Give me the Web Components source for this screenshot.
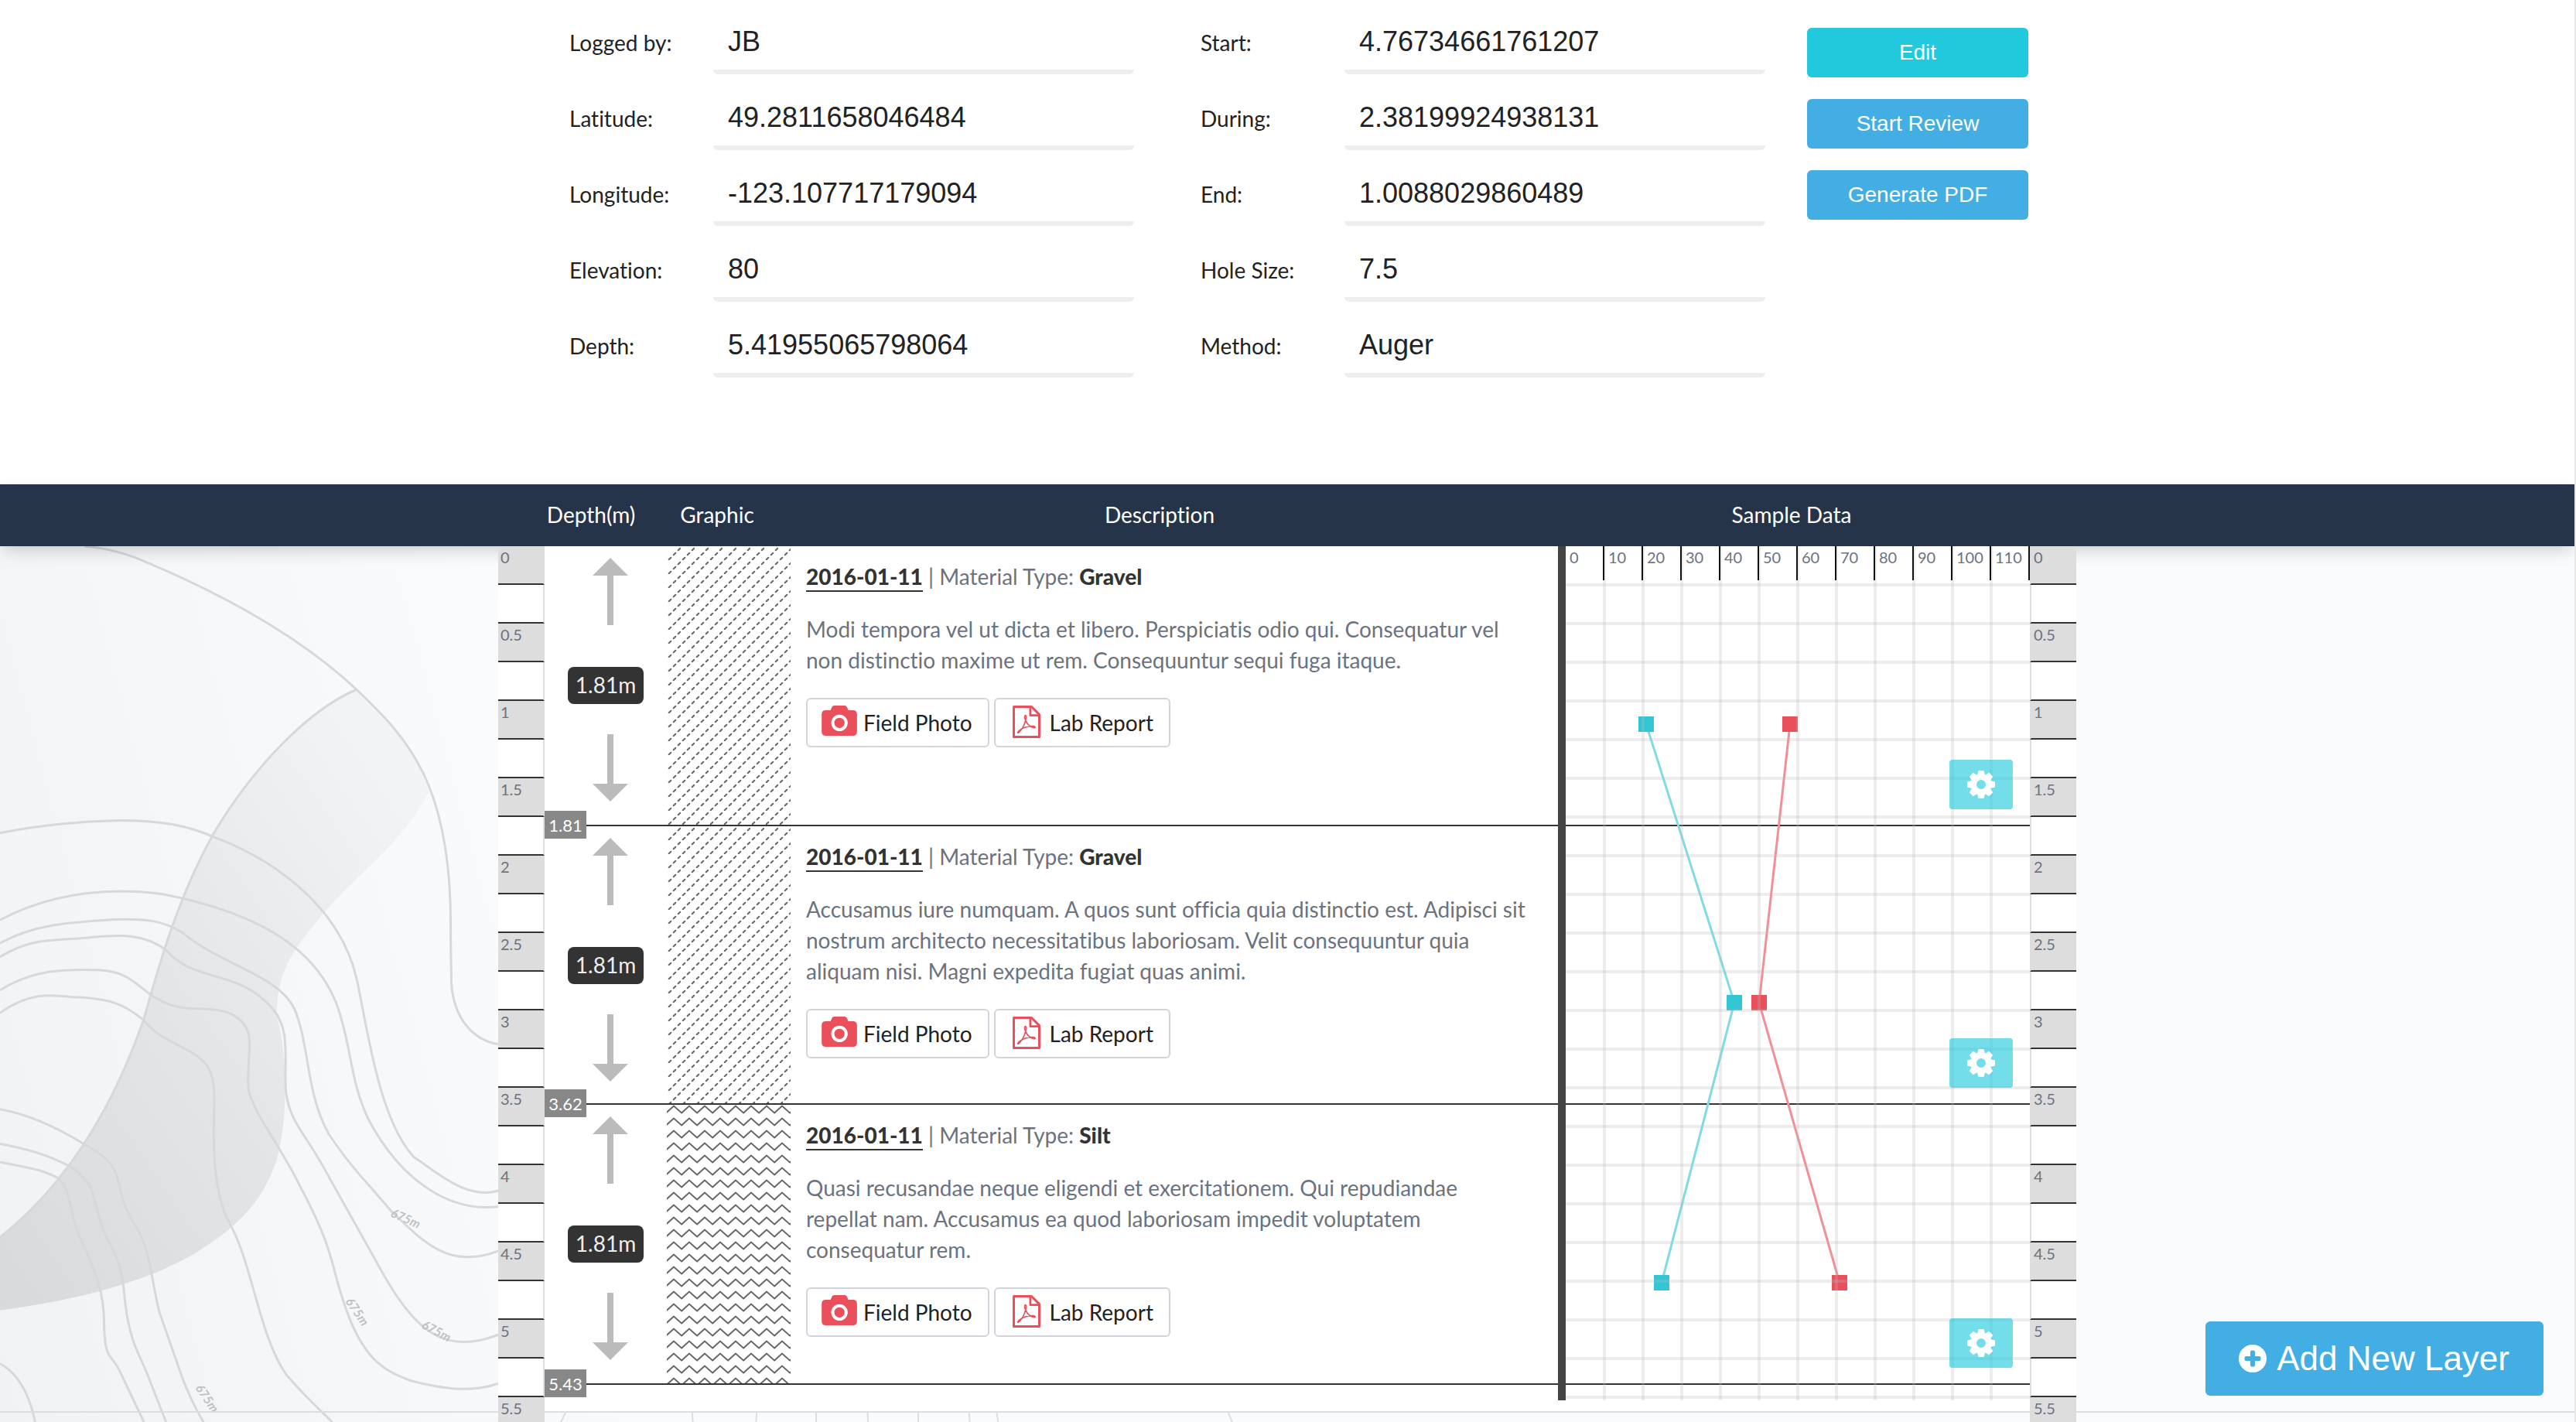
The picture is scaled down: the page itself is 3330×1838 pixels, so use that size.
<!DOCTYPE html>
<html lang="en">
<head>
<meta charset="utf-8">
<title>Borehole Log</title>
<style>
  html, body { margin: 0; height: 100%; }
  body { font: 28px/40px Lato, "Liberation Sans", sans-serif; font-variant-ligatures: none; color: #6b7280; background: #fff; }
</style>
</head>
<body>
<log-app></log-app>

<script>
const define = (name, render) => customElements.define(name, class extends HTMLElement {
  connectedCallback() {
    if (this.shadowRoot) return;
    this.attachShadow({ mode: 'open' }).innerHTML =
      '<style>*{box-sizing:border-box}</style>' + render(this);
  }
});

/* Labelled text box */
define('log-field', el => `
  <style>
    :host { display: flex; align-items: baseline; height: 80px; color: #222; }
    label { width: 186px; flex: none; }
    input { flex: 1; min-width: 0; height: 80px; padding: 2px 19px 0; border: 0; border-bottom: 6px solid #eee;
      border-radius: 6px; background: #fff; color: #222; font: 36px "Liberation Sans", Arial, sans-serif; outline: 0; }
  </style>
  <label for="f">${el.getAttribute('label')}</label>
  <input id="f" type="text" value="${el.getAttribute('value')}">`);

/* Filled action button */
define('log-button', el => `
  <style>
    :host { display: block; }
    button { width: 100%; height: 64px; border: 0; border-radius: 6px; background: var(--fill, #43aee3);
      color: #fff; font: 28px/64px "Liberation Sans", Arial, sans-serif; padding: 0; cursor: pointer; }
  </style>
  <button type="button"><slot></slot></button>`);

define('log-form', () => `
  <style>
    :host { display: block; background: #fff; }
    form { max-width: 2040px; margin: 0 auto; padding: 16px 62px 138px 92px; display: flex; }
    .col { flex: 1; display: flex; flex-direction: column; gap: 18px; }
    .col + .col { margin-left: 86px; }
    .actions { width: 286px; margin-left: 54px; padding-top: 20px; display: flex; flex-direction: column; gap: 28px; }
  </style>
  <form>
    <div class="col">
      <log-field label="Logged by:" value="JB"></log-field>
      <log-field label="Latitude:" value="49.2811658046484"></log-field>
      <log-field label="Longitude:" value="-123.107717179094"></log-field>
      <log-field label="Elevation:" value="80"></log-field>
      <log-field label="Depth:" value="5.41955065798064"></log-field>
    </div>
    <div class="col">
      <log-field label="Start:" value="4.76734661761207"></log-field>
      <log-field label="During:" value="2.38199924938131"></log-field>
      <log-field label="End:" value="1.0088029860489"></log-field>
      <log-field label="Hole Size:" value="7.5"></log-field>
      <log-field label="Method:" value="Auger"></log-field>
    </div>
    <div class="actions">
      <log-button style="--fill:#22c9dd">Edit</log-button>
      <log-button>Start Review</log-button>
      <log-button>Generate PDF</log-button>
    </div>
  </form>`);

define('log-header', () => `
  <style>
    :host { display: block; background: #26344a; color: #fff; box-shadow: 0 8px 22px -4px rgba(0,0,0,.2); }
    div { max-width: 2040px; height: 80px; margin: 0 auto; padding: 0 20px 0 60px; display: grid;
      grid-template-columns: 120px 206px 1fr 696px; text-align: center; line-height: 78px; }
  </style>
  <div><span>Depth(m)</span><span>Graphic</span><span>Description</span><span>Sample Data</span></div>`);

/* Depth scale: one cell each quarter metre, labelled each half metre */
define('log-ruler', el => {
  const right = el.hasAttribute('right');
  let cells = '';
  for (let i = 0; i < 23; i++) cells += `<div class="${i % 2 ? '' : 'on'}">${i % 2 ? '' : i / 4}</div>`;
  return `
  <style>
    :host { display: block; width: 60px; flex: none; background: #fff; margin-bottom: -32px; position: relative; }
    div { height: 50px; padding-left: 3px; font-size: 20px; line-height: 28px;
      border-bottom: 2px solid #333; border-${right ? 'left' : 'right'}: 2px solid #ddd; }
    .on { background: #ddd; }
  </style>${cells}`;
});

const PATTERNS = {
  gravel: `<pattern id="p" width="18" height="18" patternUnits="userSpaceOnUse">
      <path d="M2.7 17.3L5.3 14.7M8.7 11.3L11.3 8.7M14.7 5.3L17.3 2.7" stroke="#666" stroke-width="2" stroke-linecap="round"/></pattern>`,
  silt: `<pattern id="p" width="20" height="16" patternUnits="userSpaceOnUse">
      <path d="M-11 1.5L-1 10.5L9 1.5L19 10.5L29 1.5" fill="none" stroke="#666" stroke-width="2"/></pattern>`
};

/* One soil layer: thickness, graphic, description */
define('log-layer', el => `
  <style>
    :host { display: grid; grid-template-columns: 158px 160px 1fr; position: relative; background: #fff;
      height: var(--h, 362px); border-bottom: 2px solid #333; box-sizing: border-box; }
    .depth { display: flex; flex-direction: column; align-items: center; padding-top: 15px; }
    .arrow { display: block; width: 58px; height: 87px; }
    .size { width: 98px; height: 48px; margin: 54px 0 39px; border-radius: 8px; background: #333; color: #eee;
      text-align: center; line-height: 46px; }
    .end { position: absolute; left: 0; bottom: -18px; width: 54px; height: 36px; background: #888; color: #fff;
      font-size: 22px; line-height: 38px; text-align: center; z-index: 1; }
    .graphic { display: block; width: 160px; height: 100%; }
    .text { padding: 19px 40px 0 20px; }
    h2 { margin: 0; font: inherit; }
    h2 a { color: #333; font-weight: 900; text-decoration: none; border-bottom: 2px solid #333; padding-bottom: 1px; }
    strong { color: #333; font-weight: 900; }
    p { margin: 28px 0 29px; }
    .files { display: flex; gap: 6px; }
    .files button { display: flex; align-items: center; gap: 8px; height: 64px; padding: 0 20px 0 18px; cursor: pointer;
      background: #fff; border: 2px solid #d1d5db; border-radius: 6px; color: #222; font: inherit; }
    .camera { width: 46px; height: 39px; margin-bottom: 5px; }
    .pdf { width: 44px; height: 42px; margin-bottom: 2px; }
  </style>
  <div class="depth">
    <svg class="arrow" viewBox="0 0 58 87"><path d="M35 0L58 23H39V87H31V23H12Z" fill="#bbb"/></svg>
    <div class="size">${el.getAttribute('size')}</div>
    <svg class="arrow" viewBox="0 0 58 87"><path d="M35 87L58 64H39V0H31V64H12Z" fill="#bbb"/></svg>
  </div>
  <svg class="graphic"><defs>${PATTERNS[el.getAttribute('pattern')]}</defs><rect width="100%" height="100%" fill="url(#p)"/></svg>
  <div class="text">
    <h2><a href="#">2016-01-11</a> | Material Type: <strong>${el.getAttribute('material')}</strong></h2>
    <p><slot></slot></p>
    <div class="files">
      <button type="button">
        <svg class="camera" viewBox="96 66 137 117">
          <path fill="#e9505c" d="M112 84H131C134 74 137 66 146 66H184C193 66 196 74 199 84H217Q233 84 233 100V167Q233 183 217 183H112Q96 183 96 167V100Q96 84 112 84Z"/>
          <circle cx="165" cy="133" r="26" fill="none" stroke="#fff" stroke-width="12"/>
        </svg>Field Photo</button>
      <button type="button">
        <svg class="pdf" viewBox="831 66 109 126" fill="none" stroke="#e9505c" stroke-linejoin="round" stroke-linecap="round">
          <path stroke-width="9" d="M836 70.500H905L935 101V187.500H836Z"/>
          <path stroke-width="8" d="M900 71V104H934"/>
          <path stroke-width="5" d="M882 104C877 103 877 114 882 124C889 139 901 150 916 152C922 152 919 146 910 146C890 146 869 153 857 163C848 171 851 174 857 169C869 157 879 137 883 118C885 110 885 105 882 104Z"/>
        </svg>Lab Report</button>
    </div>
  </div>
  <div class="end">${el.getAttribute('end')}</div>`);

/* Sample chart: value across, depth down */
define('log-chart', () => {
  let grid = '', ticks = '';
  for (let x = 50; x < 600; x += 50) grid += `<path d="M${x} 0V1104"/>`;
  for (let y = 50; y <= 1100; y += 50) grid += `<path d="M0 ${y}H600"/>`;
  for (let v = 0; v <= 110; v += 10) ticks += `<span>${v}</span>`;
  const series = (pts, c, l) => `<polyline points="${pts.join(' ')}" fill="none" stroke="${l}" stroke-width="3"/>` +
    pts.map(([x, y]) => `<rect x="${x - 10}" y="${y - 10}" width="20" height="20" fill="${c}"/>`).join('');
  const teeth = [0, 45, 90, 135, 180, 225, 270, 315].map(a =>
    `<path d="M-5 -12L-3.500 -18H3.500L5 -12Z" transform="rotate(${a})"/>`).join('');
  const gear = `<button type="button" aria-label="Layer settings"><svg viewBox="-18 -18 36 36" fill="#fff">
    <circle r="9.700" fill="none" stroke="#fff" stroke-width="7.400"/>${teeth}</svg></button>`;
  return `
  <style>
    :host { display: block; position: relative; width: 600px; height: 1104px; flex: none; background: #fff; }
    .plot { display: block; position: absolute; inset: 0; width: 600px; height: 1104px; }
    .ticks { position: relative; display: flex; }
    .ticks span { width: 50px; height: 44px; padding-left: 5px; border-right: 2px solid #111; font-size: 20px; line-height: 28px; }
    button { position: absolute; right: 22px; width: 82px; height: 64px; border: 0; border-radius: 4px; padding: 0;
      background: rgba(34,201,221,.63); display: flex; align-items: center; justify-content: center; cursor: pointer; }
    button svg { width: 36px; height: 36px; }
    button:nth-of-type(1) { top: 276px; }
    button:nth-of-type(2) { top: 636px; }
    button:nth-of-type(3) { top: 998px; }
  </style>
  <svg class="plot" viewBox="0 0 600 1104">
    <path d="M0 361H600M0 721H600M0 1083H600" stroke="#333" stroke-width="2"/>
    ${series([[104, 230], [218, 590], [124, 952]], '#33c5d3', '#7fdce5')}
    ${series([[290, 230], [250, 590], [354, 952]], '#e9505c', '#f28e96')}
    <g stroke="#bbb" stroke-opacity=".26" stroke-width="4">${grid}</g>
  </svg>
  <div class="ticks">${ticks}</div>
  ${gear}${gear}${gear}`;
});

/* Topographic backdrop */
define('log-contours', () => `
  <style>
    :host { display: block; position: absolute; inset: 0; overflow: hidden;
      background: linear-gradient(75deg, #f1f2f4 0, #f6f7f9 14%, #fafbfd 26%, #fafbfd 100%); }
    svg { position: absolute; left: 0; top: 0; }
    text { font: italic bold 16px Lato, sans-serif; fill: #bfc1c4; }
  </style>
  <svg width="660" height="1132" viewBox="0 22 1568 1546" preserveAspectRatio="none">
    <defs><linearGradient id="g" x1="0" y1="1" x2="1" y2="0">
      <stop offset="0" stop-color="#d8d9db"/><stop offset=".45" stop-color="#e4e5e7"/><stop offset=".85" stop-color="#f1f2f4"/><stop offset="1" stop-color="#f4f5f7"/>
    </linearGradient></defs>
    <path fill="url(#g)" d="M0 1242C180 1160 330 1040 440 860C490 760 540 650 655 530C780 410 950 310 1095 275C1200 325 1270 380 1318 455C1220 560 1090 600 980 680C890 740 850 780 850 850C890 940 878 1050 850 1105C800 1190 710 1230 600 1270C420 1330 200 1355 0 1371Z"/>
    <g fill="none" stroke="#d6d8da" stroke-width="3">
      <path vector-effect="non-scaling-stroke" d="M0 1242C180 1160 330 1040 440 860C490 760 540 650 655 530C780 410 950 310 1095 275"/>
      <path vector-effect="non-scaling-stroke" d="M260 22Q340 26 415 42C640 95 900 170 1095 275C1250 360 1385 440 1384 690C1384 740 1386 770 1386 790C1392 860 1460 895 1530 901"/>
      <path vector-effect="non-scaling-stroke" d="M0 528Q180 508 365 506C500 506 580 516 655 535C820 570 1040 650 1095 785C1125 860 1160 1030 1270 1100C1350 1130 1430 1175 1530 1160"/>
      <path vector-effect="non-scaling-stroke" d="M0 682Q160 632 370 631C470 631 520 638 565 644C750 670 990 720 1050 860C1080 920 1080 970 1130 1032C1200 1110 1340 1200 1530 1188"/>
      <path vector-effect="non-scaling-stroke" d="M0 723C100 690 210 686 350 681C440 679 500 682 560 704C680 762 860 780 905 840C950 900 940 990 1010 1060C1080 1120 1120 1140 1200 1195C1300 1250 1380 1300 1530 1266"/>
      <path vector-effect="non-scaling-stroke" d="M0 747C90 715 150 718 250 714C340 710 430 700 510 735C590 790 720 770 820 828C900 870 870 920 878 985C890 1040 940 1060 1000 1125L1180 1310C1280 1410 1370 1450 1530 1414"/>
      <path vector-effect="non-scaling-stroke" d="M0 806C110 765 220 770 300 770C400 772 420 800 480 820C570 850 620 830 700 845C800 870 755 910 763 980C775 1020 860 1080 920 1150C1040 1280 1010 1290 1070 1380C1130 1470 1200 1480 1260 1495C1350 1508 1440 1518 1530 1500"/>
      <path vector-effect="non-scaling-stroke" d="M0 846C90 808 160 814 220 818C340 820 380 830 440 858C490 890 510 890 570 910C640 930 660 950 658 1000C655 1080 655 1120 675 1170C690 1210 710 1215 735 1255C780 1320 810 1430 880 1485C940 1525 980 1545 1020 1568"/>
      <path vector-effect="non-scaling-stroke" d="M0 1016C90 1025 180 1050 260 1078C400 1120 340 1150 405 1210C470 1270 460 1310 490 1375L560 1490Q590 1535 625 1568"/>
      <path vector-effect="non-scaling-stroke" d="M0 1077C80 1085 160 1100 215 1117C310 1150 280 1190 330 1245C380 1300 375 1310 385 1360C400 1430 430 1450 450 1480L510 1568"/>
      <path vector-effect="non-scaling-stroke" d="M0 1109C90 1120 120 1120 180 1138C220 1160 210 1190 240 1235C290 1300 320 1330 320 1400C322 1460 345 1450 365 1475L442 1568"/>
      <path vector-effect="non-scaling-stroke" d="M0 1465Q80 1490 108 1568"/>
    </g>
  </svg>
  <svg width="1700" height="1150" viewBox="0 0 1700 1150">
    <text transform="translate(504 866) rotate(24)">675m</text>
    <text transform="translate(446 976) rotate(56)">675m</text>
    <text transform="translate(544 1010) rotate(28)">675m</text>
    <text transform="translate(252 1088) rotate(56)">675m</text>
    <path fill="none" stroke="#dcdee1" stroke-width="2" d="M736 1110L716 1150M894 1110L897 1150M979 1110L976 1150M1055 1110V1150M1121 1110L1123 1150M1187 1110V1150M1252 1110L1255 1150M1287 1110L1293 1150M1584 1110L1600 1150"/>
  </svg>`);

define('log-add', () => `
  <style>
    :host { position: fixed; right: 42px; bottom: 34px; z-index: 5; }
    button { display: flex; align-items: center; gap: 13px; height: 96px; padding: 0 44px 0 43px; border: 0; border-radius: 6px;
      background: #43aee3; color: #fff; font: 44px/48px "Liberation Sans", Arial, sans-serif; cursor: pointer; }
    svg { width: 36px; height: 36px; }
  </style>
  <button type="button">
    <svg viewBox="0 0 36 36"><circle cx="18" cy="18" r="18" fill="#fff"/>
      <rect x="7.500" y="15" width="21" height="6" rx="2" fill="#43aee3"/><rect x="15" y="7.500" width="6" height="21" rx="2" fill="#43aee3"/></svg>
    <slot></slot>
  </button>`);

define('log-app', () => `
  <style>
    :host { display: flex; flex-direction: column; height: 100vh; overflow: hidden; border-right: 2px solid #e8e8e8; box-sizing: border-box; }
    log-form, log-header { flex: none; }
    log-header { position: relative; }
    main { position: relative; flex: 1; min-height: 0; }
    log-contours { z-index: -1; }
    .log { border-bottom: 2px solid #ddd; }
    .sheet { max-width: 2040px; margin: 0 auto; display: flex; align-items: flex-start; position: relative; }
    .panel { flex: 1; display: flex; align-items: flex-start; background: #fff; padding-bottom: 14px; }
    .layers { flex: 1; }
    .rule { width: 10px; height: 1104px; background: #444; position: relative; }
  </style>
  <log-form></log-form>
  <log-header></log-header>
  <main>
    <log-contours></log-contours>
    <div class="log"><div class="sheet">
      <log-ruler></log-ruler>
      <div class="panel">
        <div class="layers">
          <log-layer size="1.81m" end="1.81" pattern="gravel" material="Gravel">Modi tempora vel ut dicta et libero. Perspiciatis odio qui. Consequatur vel non distinctio maxime ut rem. Consequuntur sequi fuga itaque.</log-layer>
          <log-layer size="1.81m" end="3.62" pattern="gravel" material="Gravel" style="--h:360px">Accusamus iure numquam. A quos sunt officia quia distinctio est. Adipisci sit nostrum architecto necessitatibus laboriosam. Velit consequuntur quia aliquam nisi. Magni expedita fugiat quas animi.</log-layer>
          <log-layer size="1.81m" end="5.43" pattern="silt" material="Silt">Quasi recusandae neque eligendi et exercitationem. Qui repudiandae repellat nam. Accusamus ea quod laboriosam impedit voluptatem consequatur rem.</log-layer>
        </div>
        <div class="rule"></div>
        <log-chart></log-chart>
      </div>
      <log-ruler right></log-ruler>
    </div></div>
  </main>
  <log-add>Add New Layer</log-add>`);
</script>
</body>
</html>
